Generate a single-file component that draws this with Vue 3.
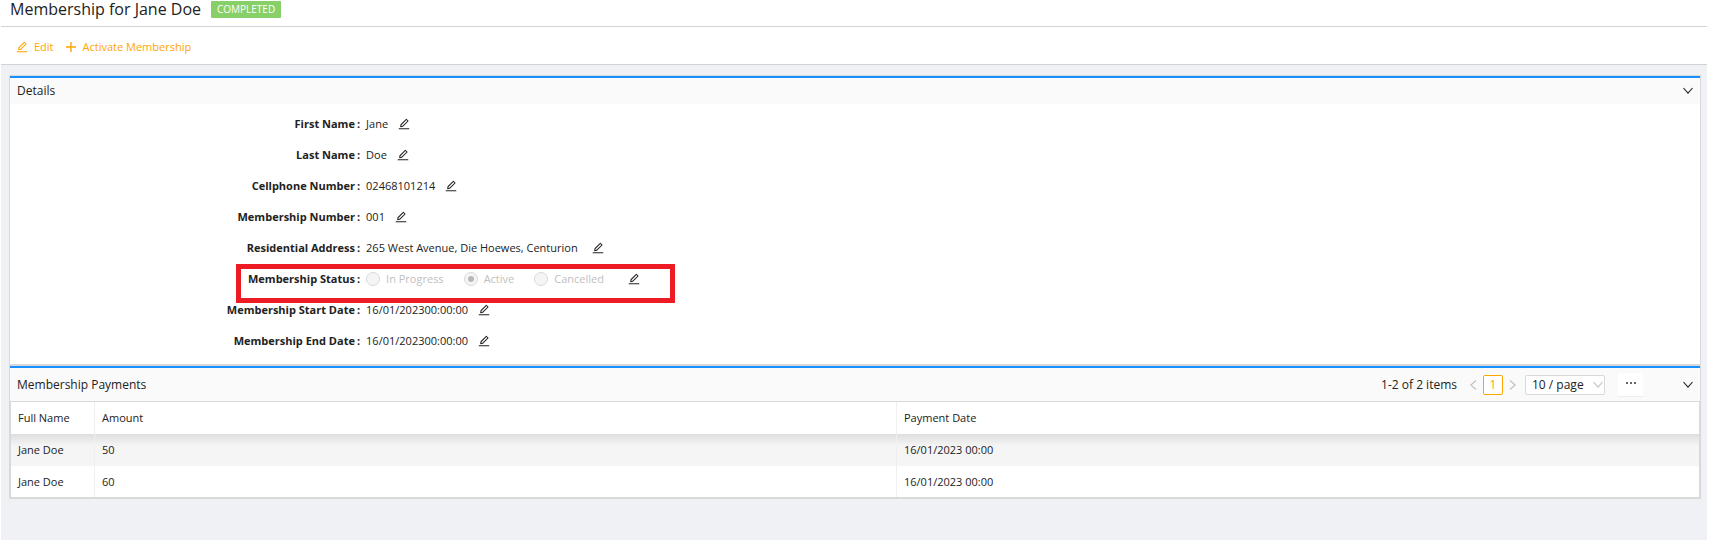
<script setup>
import { h, ref } from 'vue'

const EditIcon = () =>
  h('svg', { class: 'icon', viewBox: '64 64 896 896', fill: 'currentColor', 'aria-hidden': 'true' }, [
    h('path', {
      d: 'M257.7 752c2 0 4-.2 6-.5L431.9 722c2-.4 3.9-1.3 5.3-2.8l423.9-423.9a9.96 9.96 0 000-14.1L694.9 114.9c-1.9-1.9-4.4-2.9-7.1-2.9s-5.2 1-7.1 2.9L256.8 538.8c-1.5 1.5-2.4 3.3-2.8 5.3l-29.5 168.2a33.5 33.5 0 009.4 29.8c6.6 6.4 14.9 9.9 23.8 9.9zm67.4-174.4L687.8 215l73.3 73.3-362.7 362.6-88.9 15.7 15.6-89zM880 836H144c-17.7 0-32 14.3-32 32v36c0 4.4 3.6 8 8 8h784c4.4 0 8-3.6 8-8v-36c0-17.7-14.3-32-32-32z',
    }),
  ])

const Chevron = () =>
  h('svg', { class: 'icon', viewBox: '0 0 12 12', fill: 'none', stroke: 'currentColor', 'stroke-width': '1.1', 'aria-hidden': 'true' }, [
    h('path', { d: 'M1.5 3 6 8.2l4.5-5.2' }),
  ])

const fields = [
  { label: 'First Name', value: 'Jane', gap: 'near' },
  { label: 'Last Name', value: 'Doe', gap: 'near' },
  { label: 'Cellphone Number', value: '02468101214', gap: 'near' },
  { label: 'Membership Number', value: '001', gap: 'near' },
  { label: 'Residential Address', value: '265 West Avenue, Die Hoewes, Centurion', gap: 'far' },
  { label: 'Membership Status', options: ['In Progress', 'Active', 'Cancelled'] },
  { label: 'Membership Start Date', value: '16/01/202300:00:00', gap: 'near' },
  { label: 'Membership End Date', value: '16/01/202300:00:00', gap: 'near' },
]
const status = ref('Active')
const pageSize = ref('10 / page')
const payments = [
  { name: 'Jane Doe', amount: 50, date: '16/01/2023 00:00' },
  { name: 'Jane Doe', amount: 60, date: '16/01/2023 00:00' },
]
</script>

<template>
  <div class="page">
    <header class="title-bar">
      <h1>Membership for Jane Doe</h1>
      <span class="badge">COMPLETED</span>
    </header>
    <nav class="toolbar">
      <button type="button"><EditIcon />Edit</button>
      <button type="button">
        <svg class="icon" viewBox="0 0 12 12" stroke="currentColor" stroke-width="1.4" aria-hidden="true"><path d="M6 1v10M1 6h10" /></svg>
        Activate Membership
      </button>
    </nav>
    <main>
      <section class="card">
        <div class="card-head">
          <h2>Details</h2>
          <button type="button" class="toggle" aria-label="Collapse details"><Chevron /></button>
        </div>
        <div class="fields">
          <div v-for="f in fields" :key="f.label" class="field">
            <span class="label">{{ f.label }}<span class="colon">:</span></span>
            <div v-if="f.options" class="value" role="radiogroup" :aria-label="f.label">
              <label v-for="o in f.options" :key="o" class="option">
                <input v-model="status" type="radio" name="status" :value="o" disabled />{{ o }}
              </label>
              <button type="button" class="edit" :aria-label="'Edit ' + f.label"><EditIcon /></button>
            </div>
            <div v-else class="value">
              <span>{{ f.value }}</span>
              <button type="button" class="edit" :class="f.gap" :aria-label="'Edit ' + f.label"><EditIcon /></button>
            </div>
            <div v-if="f.options" class="highlight"></div>
          </div>
        </div>
      </section>
      <section class="card payments">
        <div class="card-head">
          <h2>Membership Payments</h2>
          <div class="pager">
            <span class="total">1-2 of 2 items</span>
            <button type="button" class="arrow prev" aria-label="Previous page"><Chevron /></button>
            <button type="button" class="current">1</button>
            <button type="button" class="arrow next" aria-label="Next page"><Chevron /></button>
            <span class="size">
              <select v-model="pageSize" aria-label="Page size"><option>10 / page</option></select>
              <Chevron />
            </span>
            <button type="button" class="more" aria-label="More">
              <svg width="10" height="2" viewBox="0 0 10 2" fill="currentColor" aria-hidden="true"><path d="M0 0h2v2H0zM4 0h2v2H4zM8 0h2v2H8z" /></svg>
            </button>
          </div>
          <button type="button" class="toggle" aria-label="Collapse payments"><Chevron /></button>
        </div>
        <table>
          <thead>
            <tr><th class="name">Full Name</th><th>Amount</th><th>Payment Date</th></tr>
          </thead>
          <tbody>
            <tr v-for="(p, i) in payments" :key="i">
              <td>{{ p.name }}</td><td>{{ p.amount }}</td><td>{{ p.date }}</td>
            </tr>
          </tbody>
        </table>
      </section>
    </main>
  </div>
</template>

<style>
body {
  background: #fff;
}
</style>

<style scoped>
.page {
  margin: 0 3px 6px 1px;
  background: #f0f1f5;
  color: #222;
  font: 11px/18px "Open Sans", "Noto Sans", sans-serif;
}
.page * {
  box-sizing: border-box;
}
button {
  padding: 0;
  border: 0;
  background: none;
  color: inherit;
  font: inherit;
  cursor: pointer;
}
.page :deep(.icon) {
  width: 12px;
  height: 12px;
  flex: none;
  display: block;
}
.title-bar {
  display: flex;
  align-items: flex-start;
  gap: 10px;
  height: 27px;
  padding-left: 9px;
  background: #fff;
  border-bottom: 1px solid #d3d3d3;
}
h1 {
  margin: 0;
  font-size: 16px;
  line-height: 18px;
  font-weight: 400;
}
.badge {
  margin-top: 1px;
  padding: 0 6px;
  background: #87d068;
  color: #fff;
  font-size: 10px;
  line-height: 17px;
  border-radius: 1px;
}
.toolbar {
  display: flex;
  align-items: center;
  gap: 11px;
  height: 38px;
  padding: 2px 0 0 15px;
  background: #fff;
  border-bottom: 1px solid #d3d3d3;
  color: #ffa500;
}
.toolbar button {
  display: flex;
  align-items: center;
  gap: 6px;
}
main {
  padding: 10px 6px 41px 8px;
}
.card {
  background: #fff;
  border: 1px solid #d9d9d9;
  border-bottom-width: 2px;
}
.card.payments {
  border-top: 0;
}
.card-head {
  display: flex;
  align-items: center;
  height: 28px;
  padding: 0 6px 0 7px;
  background: #fafafa;
  border-top: 2px solid #1890ff;
}
.payments .card-head {
  height: 36px;
  border-bottom: 1px solid #d9d9d9;
}
h2 {
  margin: 0 auto 0 0;
  font-size: 12px;
  line-height: 18px;
  font-weight: 500;
}
.fields {
  padding: 4px 0 8px;
}
.field {
  position: relative;
  display: grid;
  grid-template-columns: 5fr 19fr;
  align-items: center;
  height: 31px;
}
.label {
  padding-right: 2px;
  text-align: right;
  font-weight: 700;
}
.colon {
  margin-left: 2px;
}
.value {
  display: flex;
  align-items: center;
  padding-left: 4px;
}
.near {
  margin-left: 10px;
}
.far {
  margin-left: 14px;
}
.option {
  display: flex;
  align-items: center;
  gap: 6px;
  margin-right: 20px;
  color: #bfbfbf;
}
.option input {
  appearance: none;
  display: grid;
  place-items: center;
  width: 14px;
  height: 14px;
  margin: 0;
  border: 1px solid #d9d9d9;
  border-radius: 50%;
  background: #f5f5f5;
}
.option input:checked::after {
  content: "";
  width: 6px;
  height: 6px;
  border-radius: 50%;
  background: #b8b8b8;
}
.option + .edit {
  margin-left: 4px;
}
.highlight {
  position: absolute;
  top: 1px;
  left: 226px;
  width: 439px;
  height: 39px;
  border: 5px solid #ed1c24;
  pointer-events: none;
}
.pager {
  display: flex;
  align-items: center;
  margin-right: 39px;
  font-size: 12px;
}
.total {
  margin-right: 10px;
  font-weight: 500;
}
.arrow {
  color: #bfbfbf;
}
.prev {
  transform: rotate(90deg);
}
.next {
  transform: rotate(-90deg);
}
.current {
  width: 20px;
  height: 20px;
  margin: 0 4px;
  border: 1px solid #ffa500;
  border-radius: 2px;
  background: #fff;
  color: #ffa500;
}
.size {
  display: grid;
  align-items: center;
  width: 80px;
  margin: 0 13px 0 6px;
  color: #bfbfbf;
}
.size > * {
  grid-area: 1 / 1;
}
.size :deep(.icon) {
  justify-self: end;
  margin-right: 1px;
  pointer-events: none;
}
select {
  appearance: none;
  width: 100%;
  height: 20px;
  padding: 0 6px;
  border: 1px solid #d9d9d9;
  border-radius: 2px;
  background: #fff;
  color: #222;
  font: inherit;
}
.more {
  display: flex;
  justify-content: center;
  width: 25px;
  height: 24px;
  padding-top: 9px;
  background: #fff;
  border-bottom: 1px solid #eee;
  color: #666;
}
.more svg {
  flex: none;
}
table {
  width: 100%;
  table-layout: fixed;
  border-collapse: separate;
  border-spacing: 0;
  border-left: 1px solid #d9d9d9;
  border-right: 1px solid #d9d9d9;
}
th,
td {
  height: 31px;
  padding: 0 7px;
  border-right: 1px solid #efefef;
  text-align: left;
  font-weight: 400;
}
th {
  height: 32px;
  background: #fff;
}
th:last-child,
td:last-child {
  border-right: 0;
}
.name {
  width: 84px;
}
tbody tr:first-child td {
  height: 32px;
  background: linear-gradient(#dedede, #f5f5f5 12px);
}
</style>
